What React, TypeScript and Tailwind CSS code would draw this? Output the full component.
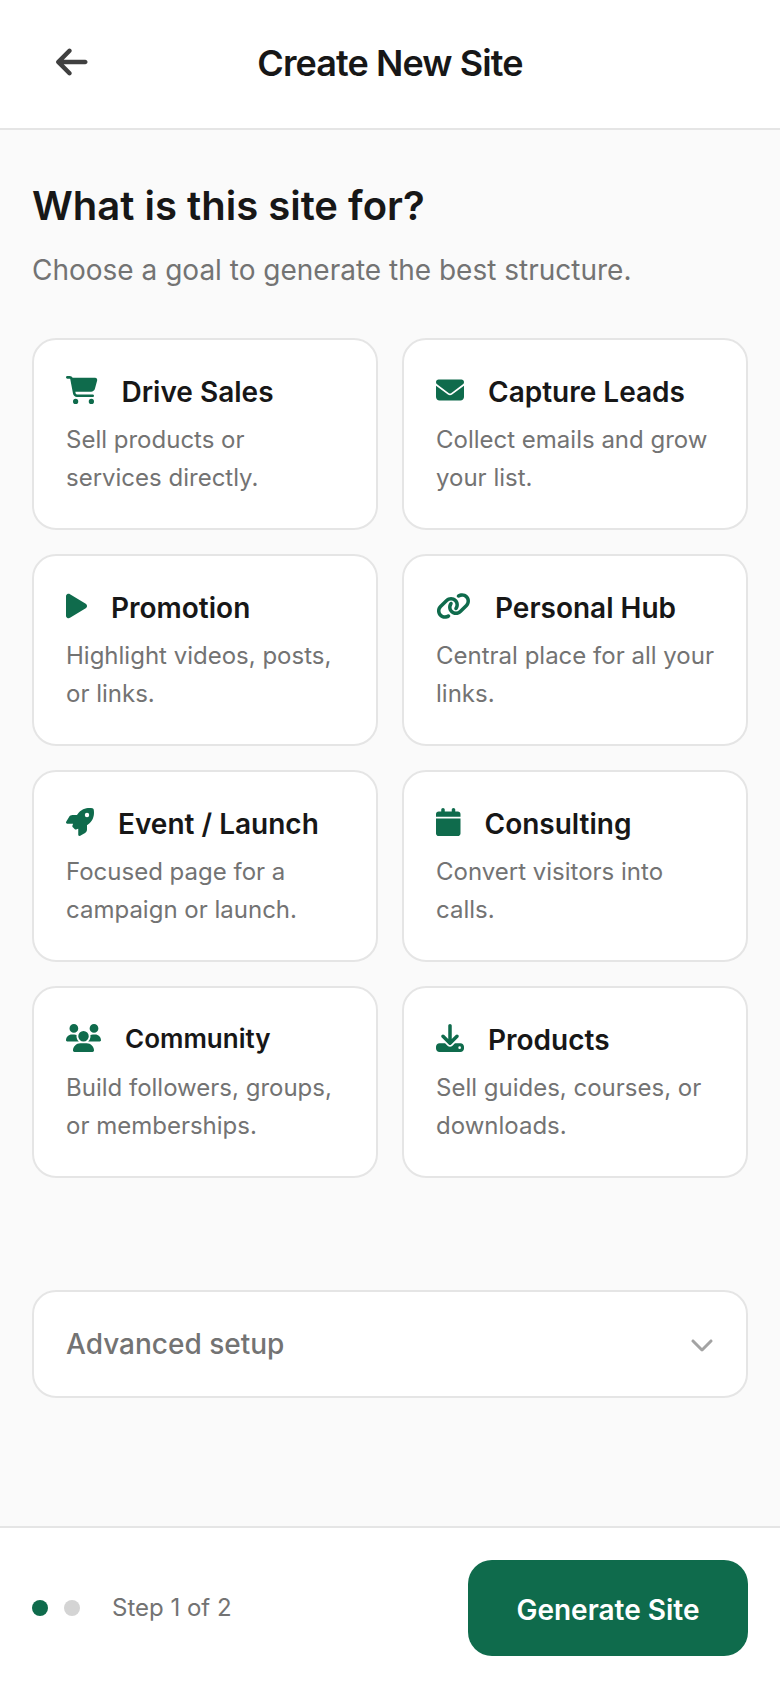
import type { IconType } from 'react-icons';
import {
  FaArrowLeft,
  FaCalendar,
  FaCartShopping,
  FaChevronDown,
  FaDownload,
  FaEnvelope,
  FaLink,
  FaPlay,
  FaRocket,
  FaUsers,
} from 'react-icons/fa6';

type Goal = {
  title: string;
  text: string;
  icon: IconType;
  iconClass: string;
  titleClass?: string;
};

const GOALS: Goal[] = [
  { title: 'Drive Sales', text: 'Sell products or services directly.', icon: FaCartShopping, iconClass: 'w-[31.5px]' },
  { title: 'Capture Leads', text: 'Collect emails and grow your list.', icon: FaEnvelope, iconClass: 'w-7' },
  { title: 'Promotion', text: 'Highlight videos, posts, or links.', icon: FaPlay, iconClass: 'w-[21px]' },
  { title: 'Personal Hub', text: 'Central place for all your links.', icon: FaLink, iconClass: 'w-[35px]' },
  { title: 'Event / Launch', text: 'Focused page for a campaign or launch.', icon: FaRocket, iconClass: 'w-7' },
  { title: 'Consulting', text: 'Convert visitors into calls.', icon: FaCalendar, iconClass: 'w-[24.5px]' },
  { title: 'Community', text: 'Build followers, groups, or memberships.', icon: FaUsers, iconClass: 'w-[35px]', titleClass: 'text-[26px] leading-[44px]' },
  { title: 'Products', text: 'Sell guides, courses, or downloads.', icon: FaDownload, iconClass: 'w-7' },
];

function GoalCard({ title, text, icon: Icon, iconClass, titleClass = 'text-[28px] leading-[46px]' }: Goal) {
  return (
    <button className="h-48 rounded-3xl border-2 border-[#e5e5e5] bg-white px-8 pt-7 text-left flex flex-col">
      <div className="flex h-[53px] items-start gap-6">
        <Icon className={`mt-2 h-7 shrink-0 text-[#0f6b4c] ${iconClass}`} />
        <h3 className={`mt-px font-semibold text-[#171717] ${titleClass}`}>{title}</h3>
      </div>
      <p className="text-2xl leading-[38px] text-[#737373]">{text}</p>
    </button>
  );
}

export default function App() {
  return (
    <div className="flex h-[1688px] w-[780px] flex-col bg-[#fafafa] font-['Inter',sans-serif]">
      {/* Header */}
      <header className="grid h-[130px] shrink-0 grid-cols-[80px_1fr_80px] items-center border-b-2 border-[#e5e5e5] bg-white px-8">
        <button className="flex justify-center pb-1">
          <FaArrowLeft className="h-9 w-[31.5px] text-[#404040]" />
        </button>
        <h1 className="pb-0.5 text-center text-4xl font-semibold tracking-[-0.025em] text-[#171717]">Create New Site</h1>
      </header>

      <main className="flex-1 px-8 pt-12">
        <h2 className="text-[40px] leading-[56px] font-semibold text-[#171717]">What is this site for?</h2>
        <p className="mt-2 text-[28px] leading-[56px] text-[#737373]">Choose a goal to generate the best structure.</p>

        {/* Goals */}
        <div className="mt-10 grid grid-cols-2 gap-6">
          {GOALS.map((goal) => (
            <GoalCard key={goal.title} {...goal} />
          ))}
        </div>

        <button className="mt-28 flex h-[108px] w-full items-center justify-between rounded-3xl border-2 border-[#e5e5e5] bg-white px-8">
          <span className="text-[28px] font-medium text-[#737373]">Advanced setup</span>
          <FaChevronDown className="h-6 w-6 text-[#a3a3a3]" />
        </button>
      </main>

      {/* Footer */}
      <footer className="flex h-[162px] shrink-0 items-center justify-between border-t-2 border-[#e5e5e5] bg-white px-8">
        <div className="flex items-center gap-4">
          <span className="size-4 rounded-full bg-[#0f6b4c]" />
          <span className="size-4 rounded-full bg-[#d4d4d4]" />
          <span className="ml-4 text-2xl text-[#737373]">Step 1 of 2</span>
        </div>
        <button className="h-24 w-[280px] rounded-3xl bg-[#0f6b4c] pt-1 text-[28px] font-semibold text-white">
          Generate Site
        </button>
      </footer>
    </div>
  );
}
